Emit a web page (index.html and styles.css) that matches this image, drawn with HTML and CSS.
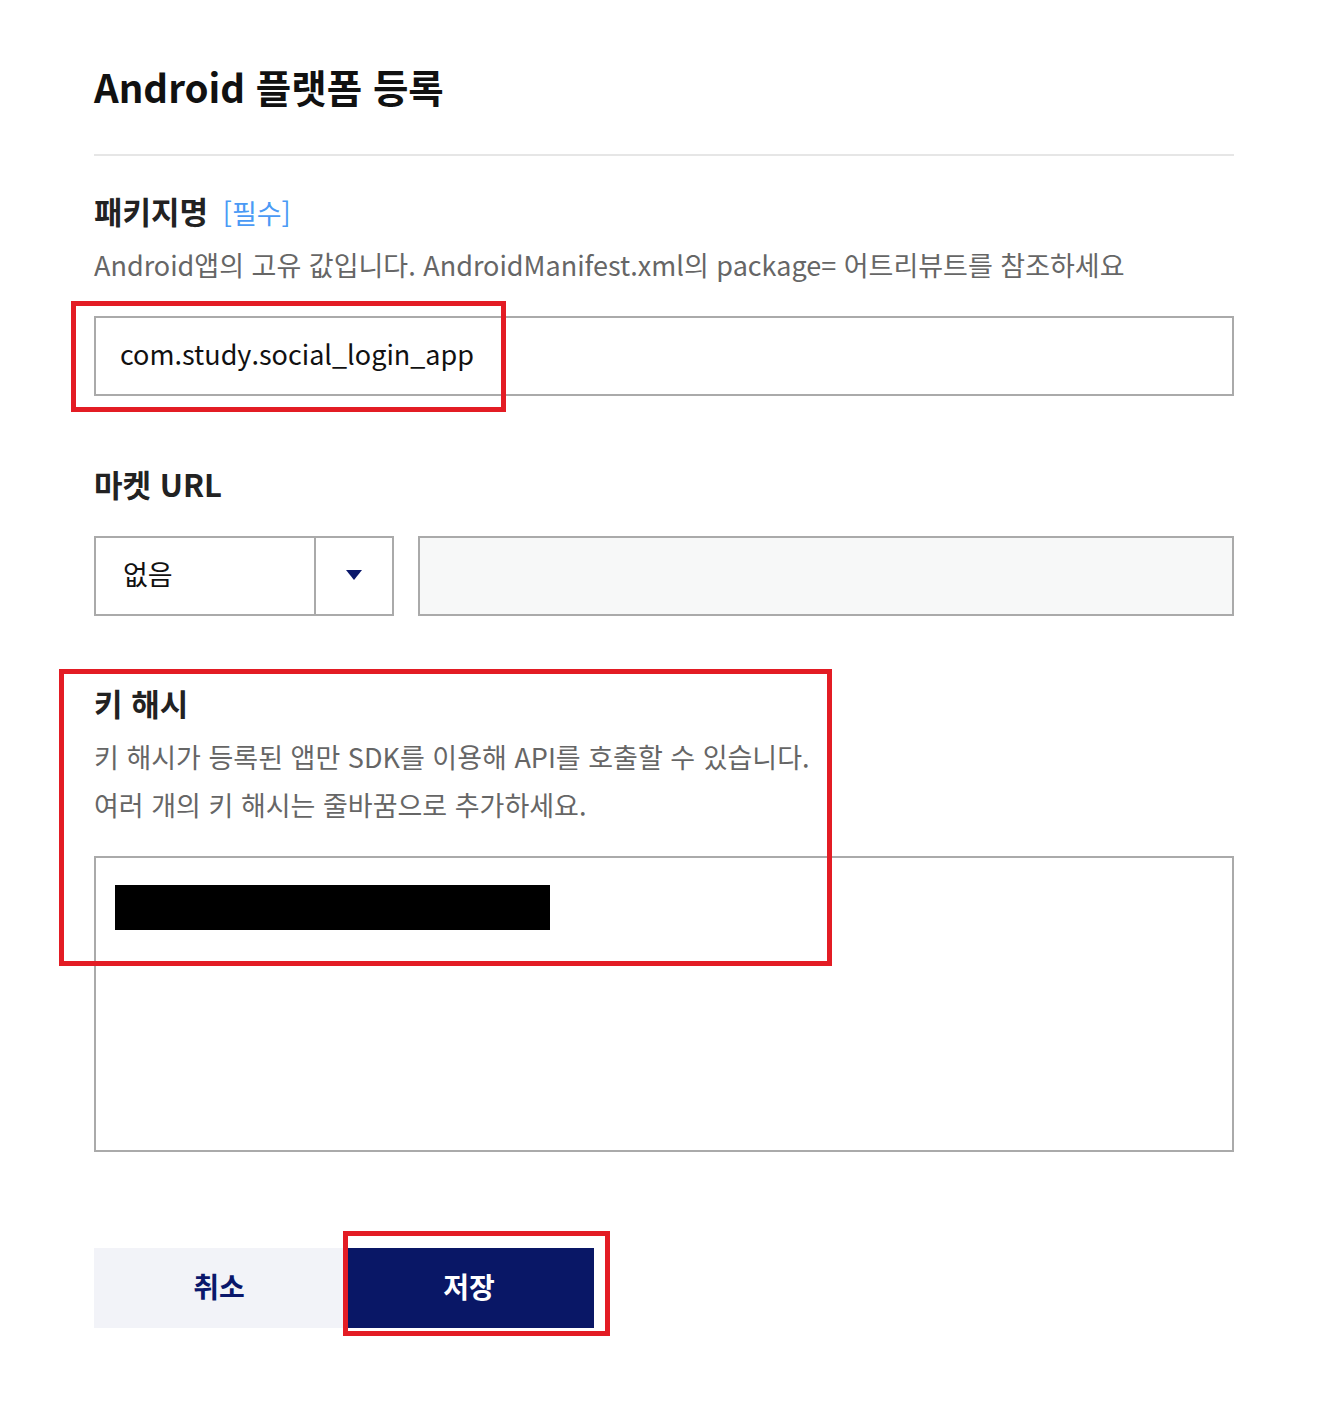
FILE: index.html
```html
<!DOCTYPE html>
<html lang="ko">
<head>
<meta charset="utf-8">
<title>Android 플랫폼 등록</title>
<link rel="stylesheet" href="styles.css">
</head>
<body>
<div class="page">
  <h1 class="title">Android 플랫폼 등록</h1>
  <hr class="divider">

  <section class="field field-package">
    <h2 class="label">패키지명 <span class="required">[필수]</span></h2>
    <p class="desc">Android앱의 고유 값입니다. AndroidManifest.xml의 package= 어트리뷰트를 참조하세요</p>
    <div class="input">com.study.social_login_app</div>
  </section>

  <section class="field field-market">
    <h2 class="label">마켓 URL</h2>
    <div class="market-row">
      <div class="select">
        <span class="select-value">없음</span>
        <span class="select-arrow"><svg width="16" height="10" viewBox="0 0 16 10"><path d="M0 0H16L8 10Z" fill="#0a176b"/></svg></span>
      </div>
      <div class="input input-disabled"></div>
    </div>
  </section>

  <section class="field field-keyhash">
    <h2 class="label">키 해시</h2>
    <p class="desc desc-multi">키 해시가 등록된 앱만 SDK를 이용해 API를 호출할 수 있습니다.<br>여러 개의 키 해시는 줄바꿈으로 추가하세요.</p>
    <div class="textarea"><div class="redacted"></div></div>
  </section>

  <div class="actions">
    <button class="btn btn-cancel">취소</button>
    <button class="btn btn-save">저장</button>
  </div>

  <div class="mark mark-package"></div>
  <div class="mark mark-keyhash"></div>
  <div class="mark mark-save"></div>
</div>
</body>
</html>
```

FILE: styles.css
```css
* { box-sizing: border-box; }

html, body {
  margin: 0;
  padding: 0;
  background: #ffffff;
}

body {
  font-family: "Noto Sans CJK KR", "Noto Sans", sans-serif;
  color: #111111;
}

.page {
  position: relative;
  width: 1328px;
  min-height: 1414px;
  padding: 60px 94px 86px 94px;
}

.title {
  margin: 0;
  height: 54px;
  font-size: 38.5px;
  line-height: 52px;
  font-weight: 700;
  color: #111111;
}

.divider {
  margin: 40px 0 0 0;
  border: 0;
  height: 2px;
  background: #e6e6e6;
}

.field { margin: 0; }

.label {
  margin: 0;
  height: 40px;
  font-size: 31px;
  line-height: 38px;
  font-weight: 700;
  color: #222222;
}

.field-package .label { margin-top: 36px; }
.field-market .label { margin-top: 69px; }
.field-keyhash .label { margin-top: 68px; }

.required {
  font-size: 27px;
  line-height: 1;
  font-weight: 400;
  color: #4a9af5;
  margin-left: 6px;
}

.desc {
  margin: 14px 0 0 0;
  height: 40px;
  font-size: 27px;
  line-height: 37px;
  color: #666666;
}

.desc-multi {
  margin-top: 9px;
  height: 96px;
  line-height: 48px;
}

.input {
  height: 80px;
  border: 2px solid #aaaaaa;
  background: #ffffff;
  padding-left: 24px;
  font-size: 27px;
  line-height: 72px;
  color: #111111;
}

.field-package .input { margin-top: 30px; }

.market-row {
  display: flex;
  gap: 24px;
  margin-top: 31px;
}

.select {
  width: 300px;
  height: 80px;
  border: 2px solid #aaaaaa;
  display: flex;
  flex: none;
}

.select-value {
  flex: 1;
  padding-left: 27px;
  font-size: 27px;
  line-height: 72px;
  color: #111111;
}

.select-arrow {
  width: 78px;
  border-left: 2px solid #aaaaaa;
  display: flex;
  align-items: center;
  justify-content: center;
  padding-bottom: 2px;
}

.input-disabled {
  flex: 1;
  background: #f7f8f8;
}

.textarea {
  margin-top: 27px;
  height: 296px;
  border: 2px solid #aaaaaa;
  padding: 27px 0 0 19px;
}

.redacted {
  width: 435px;
  height: 45px;
  background: #000000;
}

.actions {
  display: flex;
  margin-top: 96px;
}

.btn {
  width: 250px;
  height: 80px;
  border: 0;
  padding: 0 0 5px 0;
  font-family: "Noto Sans CJK KR", "Noto Sans", sans-serif;
  font-size: 28px;
  font-weight: 700;
}

.btn-cancel {
  background: #f2f3f8;
  color: #0a176b;
}

.btn-save {
  background: #091766;
  color: #ffffff;
}

.mark {
  position: absolute;
  border: 5px solid #e31c24;
}

.mark-package {
  left: 71px;
  top: 301px;
  width: 435px;
  height: 111px;
}

.mark-keyhash {
  left: 59px;
  top: 669px;
  width: 773px;
  height: 297px;
}

.mark-save {
  left: 343px;
  top: 1231px;
  width: 267px;
  height: 105px;
}
```
